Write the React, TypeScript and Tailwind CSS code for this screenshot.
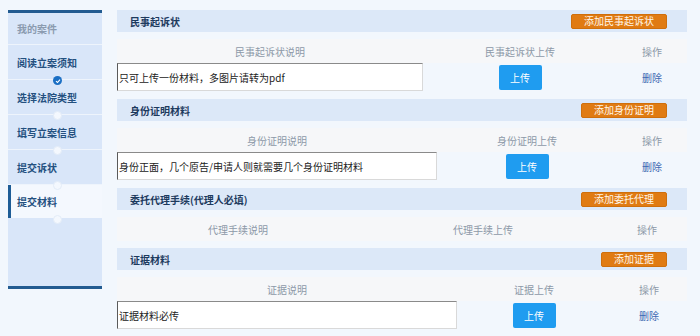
import React from "react";

type Sec = {
  title: string;
  btn: string;
  cols: string;
  desc: string;
  up: string;
  text?: string;
};

const sections: Sec[] = [
  {
    title: "民事起诉状",
    btn: "添加民事起诉状",
    cols: "grid-cols-[306px_194px_1fr]",
    desc: "民事起诉状说明",
    up: "民事起诉状上传",
    text: "只可上传一份材料，多图片请转为pdf",
  },
  {
    title: "身份证明材料",
    btn: "添加身份证明",
    cols: "grid-cols-[320px_180px_1fr]",
    desc: "身份证明说明",
    up: "身份证明上传",
    text: "身份正面，几个原告/申请人则就需要几个身份证明材料",
  },
  {
    title: "委托代理手续(代理人必填)",
    btn: "添加委托代理",
    cols: "grid-cols-[242px_248px_1fr]",
    desc: "代理手续说明",
    up: "代理手续上传",
  },
  {
    title: "证据材料",
    btn: "添加证据",
    cols: "grid-cols-[340px_154px_1fr]",
    desc: "证据说明",
    up: "证据上传",
    text: "证据材料必传",
  },
];

const navItems = ["阅读立案须知", "选择法院类型", "填写立案信息", "提交诉状"];

function Dot({ top, active }: { top: number; active?: boolean }) {
  return (
    <div
      className={
        "absolute left-[45px] w-[9px] h-[9px] rounded-full flex items-center justify-center " +
        (active ? "bg-[#1b6fc4]" : "bg-[#f4f8fe] border border-[#e3ecf8]")
      }
      style={{ top }}
    >
      {active && (
        <svg width="6" height="6" viewBox="0 0 6 6">
          <path d="M1 3.1 L2.5 4.5 L5 1.6" stroke="white" strokeWidth="1.1" fill="none" />
        </svg>
      )}
    </div>
  );
}

function Section({ s }: { s: Sec }) {
  return (
    <div className="flex flex-col">
      <div className="h-[22px] bg-[#dce8f8] flex items-center justify-between pl-[13px] pr-[20px]">
        <span className="text-[10px] font-bold text-[#1d3a5e]">{s.title}</span>
        <span className="h-[15px] px-3 flex items-center bg-[#e07b13] border border-[#cf6f0c] rounded-[2px] text-[10px] text-[#fff6e8] leading-none">
          {s.btn}
        </span>
      </div>
      <div className={"grid mt-[7px] h-[24px] bg-[#f6f7f9] items-center text-center text-[10px] text-[#8d99a8] " + s.cols}>
        <span>{s.desc}</span>
        <span>{s.up}</span>
        <span>操作</span>
      </div>
      {s.text ? (
        <div className={"grid h-[28px] items-center text-center mb-[8px] " + s.cols}>
          <div className="h-[28px] bg-white border-t border-l border-t-[#8a8a8a] border-l-[#5a5a5a] border-b border-r border-b-[#d9d9d9] border-r-[#d9d9d9] flex items-center text-left text-[10px] text-[#222] pl-[1px]">
            {s.text}
          </div>
          <div className="flex justify-center">
            <span className="w-[43px] h-[25px] bg-[#1f9cf0] rounded-[2px] flex items-center justify-center text-[10px] text-white">
              上传
            </span>
          </div>
          <span className="text-[10px] text-[#3d69b2]">删除</span>
        </div>
      ) : (
        <div className="h-[7px]" />
      )}
    </div>
  );
}

export default function App() {
  return (
    <div className="w-[700px] h-[336px] overflow-hidden bg-[#f2f7fd] font-['Noto_Sans_CJK_SC','Microsoft_YaHei',sans-serif] flex">
      <div className="ml-2 mt-[10px] w-[94px] h-[279px] relative flex flex-col border-t-[3px] border-b-[3px] border-[#225b91] bg-[#d9e6f9]">
        <div className="h-[32px] flex items-center pl-[9px] text-[10px] font-bold text-[#8b9bb0] border-b border-[#eef4fc]">
          我的案件
        </div>
        {navItems.map((t) => (
          <div
            key={t}
            className="h-[35px] flex items-center pl-[9px] text-[10px] font-bold text-[#24507f] border-b border-[#eef4fc]"
          >
            {t}
          </div>
        ))}
        <div className="h-[33px] flex items-center pl-[6px] text-[10px] font-bold text-[#24507f] bg-[#f4f8fe] border-l-[3px] border-[#1d5c96]">
          提交材料
        </div>
        <div className="flex-1" />
        <Dot top={63} active />
        <Dot top={98} />
        <Dot top={133} />
        <Dot top={168} />
        <Dot top={202} />
      </div>
      <div className="ml-[15px] mt-[10px] w-[570px] flex flex-col">
        {sections.map((s) => (
          <Section key={s.title} s={s} />
        ))}
      </div>
    </div>
  );
}
